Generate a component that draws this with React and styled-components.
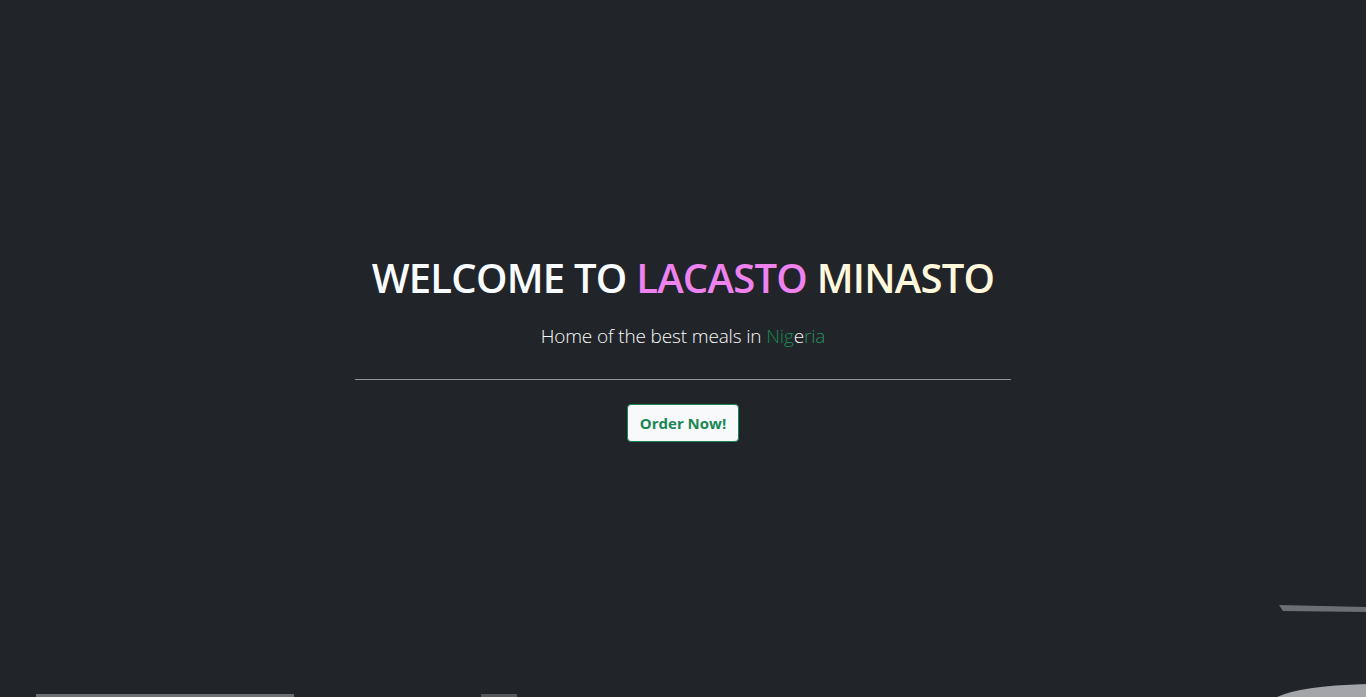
import styled, { createGlobalStyle } from "styled-components";

const GlobalStyle = createGlobalStyle`
    html, body {
        margin: 0;
        padding: 0;
        background: #212529;
        font-family: "Open Sans", "Noto Sans", sans-serif;
    }
`

export default function App() {
    return (
        <>
            <GlobalStyle />
            <Page>
                <Hero>
                    <Title>
                        WELCOME TO <Pink>LACASTO</Pink> <Cream>MINASTO</Cream>
                    </Title>
                    <Lead>
                        Home of the best meals in <Flag>Nig</Flag><FlagWhite>e</FlagWhite><Flag $light>ria</Flag>
                    </Lead>
                    <Rule />
                    <OrderButton>Order Now!</OrderButton>
                </Hero>
                <Decor viewBox="0 0 1366 697" preserveAspectRatio="none">
                    <path d="M1279 605 L1366 607 L1366 612 L1283 611 Z" fill="#6c6f73" />
                    <path d="M1277 697 Q1300 686 1366 684 L1366 697 Z" fill="#a3a5a8" />
                    <rect x="36" y="694" width="258" height="3" fill="#6c6f73" />
                    <rect x="481" y="694" width="36" height="3" fill="#55585c" />
                </Decor>
            </Page>
        </>
    )
}

const Page = styled.div`
    position: relative;
    height: 697px;
    display: flex;
    align-items: center;
    justify-content: center;
    overflow: hidden;
`
const Hero = styled.div`
    width: 656px;
    display: flex;
    flex-direction: column;
    align-items: center;
    text-align: center;
    margin-top: -2px;
`
const Title = styled.h1`
    margin: 0 0 21px;
    font-size: 40px;
    font-weight: 600;
    line-height: 1.2;
    color: #f8fbff;
    letter-spacing: -0.75px;
    white-space: nowrap;
`
const Pink = styled.span`
    color: #ee82ee;
`
const Cream = styled.span`
    color: #fff8dc;
`
const Lead = styled.p`
    margin: 0;
    font-size: 19px;
    font-weight: 300;
    color: #f8f9fa;
    letter-spacing: -0.15px;
`
const Flag = styled.span`
    color: ${p => (p.$light ? "#2a9160" : "#198754")};
`
const FlagWhite = styled.span`
    color: #f8f9fa;
`
const Rule = styled.hr`
    width: 100%;
    margin: 30px 0 24px;
    border: 0;
    border-top: 1px solid #909396;
`
const OrderButton = styled.button`
    height: 38px;
    padding: 0 12px;
    font-family: "Open Sans", "Noto Sans", sans-serif;
    font-size: 15px;
    font-weight: 700;
    color: #198754;
    background: #f8f9fa;
    border: 1px solid #198754;
    border-radius: 4px;
    cursor: pointer;
`
const Decor = styled.svg`
    position: absolute;
    inset: 0;
    width: 100%;
    height: 100%;
    pointer-events: none;
`
